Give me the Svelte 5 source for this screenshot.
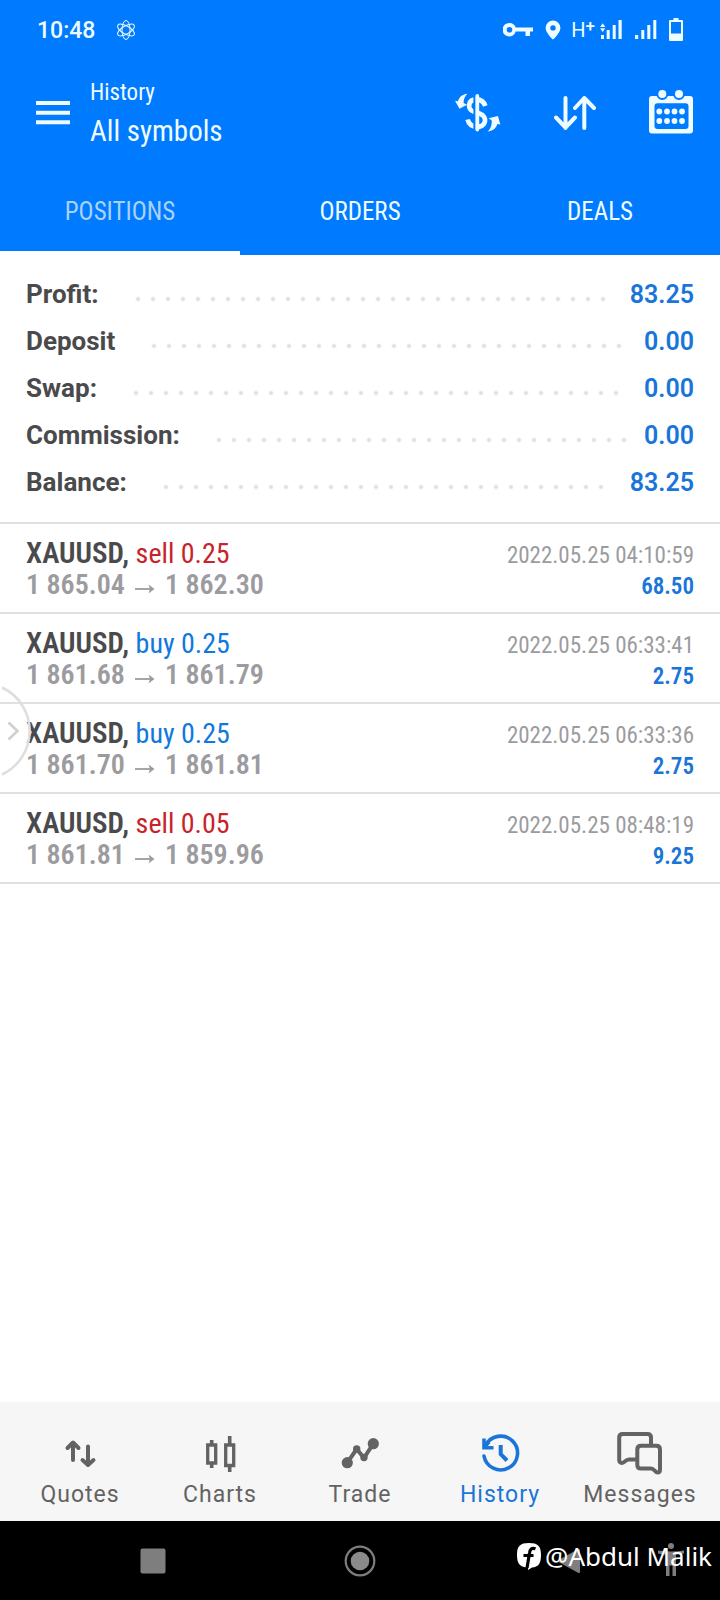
<script>
  const tabs = ['POSITIONS', 'ORDERS', 'DEALS'];
  let activeTab = $state('POSITIONS');

  const summary = [
    { label: 'Profit:', value: '83.25' },
    { label: 'Deposit', value: '0.00' },
    { label: 'Swap:', value: '0.00' },
    { label: 'Commission:', value: '0.00' },
    { label: 'Balance:', value: '83.25' }
  ];

  const deals = [
    { symbol: 'XAUUSD,', side: 'sell', volume: '0.25', open: '1 865.04', close: '1 862.30', time: '2022.05.25 04:10:59', profit: '68.50' },
    { symbol: 'XAUUSD,', side: 'buy', volume: '0.25', open: '1 861.68', close: '1 861.79', time: '2022.05.25 06:33:41', profit: '2.75' },
    { symbol: 'XAUUSD,', side: 'buy', volume: '0.25', open: '1 861.70', close: '1 861.81', time: '2022.05.25 06:33:36', profit: '2.75' },
    { symbol: 'XAUUSD,', side: 'sell', volume: '0.05', open: '1 861.81', close: '1 859.96', time: '2022.05.25 08:48:19', profit: '9.25' }
  ];

  const sections = ['Quotes', 'Charts', 'Trade', 'History', 'Messages'];
  let activeSection = $state('History');
</script>

<div class="screen">
  <header class="top">
    <div class="status">
      <span class="clock">10:48</span>
      <svg class="atom" width="20" height="22" viewBox="0 0 20 22" fill="none" stroke="currentColor" stroke-width="1">
        <ellipse cx="10" cy="11" rx="4" ry="9.5" />
        <ellipse cx="10" cy="11" rx="4" ry="9.5" transform="rotate(60 10 11)" />
        <ellipse cx="10" cy="11" rx="4" ry="9.5" transform="rotate(-60 10 11)" />
      </svg>
      <span class="fill"></span>
      <svg width="30" height="24" viewBox="0 0 30 24">
        <path fill="currentColor" fill-rule="evenodd" d="M6.5 5a6.7 6.7 0 0 1 6.2 4.5H30v4h-3V18h-4.500v-4.500h-9.800A6.700 6.700 0 1 1 6.500 5zM6.500 9a2.800 2.800 0 1 0 0 5.600a2.800 2.800 0 0 0 0-5.600z" />
      </svg>
      <svg class="pin" width="16" height="20" viewBox="0 0 16 20">
        <path fill="currentColor" fill-rule="evenodd" d="M8 .5A7.400 7.400 0 0 0 .6 8C.6 13 8 19.500 8 19.500S15.400 13 15.400 8A7.400 7.400 0 0 0 8 .5zM8 5.200a2.700 2.700 0 1 1 0 5.400a2.700 2.700 0 0 1 0-5.400z" />
      </svg>
      <span class="net">H<sup>+</sup></span>
      <svg class="signal" width="22" height="22" viewBox="0 0 22 22" fill="currentColor">
        <path d="M.1 8L2.700 4.300L5.300 8zM.1 9.200L2.700 12.900L5.300 9.200zM1 16h3v4H1zM6.700 11h3v9h-3zM12.700 6h3v14h-3zM18.500 1h3.200v19h-3.200z" />
      </svg>
      <svg class="signal two" width="22" height="22" viewBox="0 0 22 22" fill="currentColor">
        <path d="M0 16h3.200v4H0zM6.300 11h3v9h-3zM12.300 6h3v14h-3zM18.300 1h3v19h-3z" />
      </svg>
      <svg class="battery" width="14" height="24" viewBox="0 0 14 24">
        <path fill="currentColor" fill-rule="evenodd" d="M4.500 0h5v2H13a1 1 0 0 1 1 1v19a1 1 0 0 1-1 1H1a1 1 0 0 1-1-1V3a1 1 0 0 1 1-1h3.500zM2 4v11.500h10V4z" />
      </svg>
    </div>

    <div class="bar">
      <button class="menu" aria-label="Menu">
        <svg width="34" height="26" viewBox="0 0 34 26" fill="currentColor">
          <path d="M0 1h34v4H0zM0 10.700h34v4H0zM0 20.300h34v4H0z" />
        </svg>
      </button>
      <div class="title">
        <span class="overline">History</span>
        <h1>All symbols</h1>
      </div>
      <button aria-label="Currency">
        <svg width="46" height="40" viewBox="0 0 46 40" fill="none" stroke="currentColor">
          <path stroke-width="4.800" d="M30.300 13C28.500 8 25.500 6.500 21.500 6.500C12.500 6.500 12 16.500 18.500 18.500L25 20.800C33 24 31 34 22.300 33.800C17 33.700 13.800 31.500 12.600 26.500" />
          <path stroke="#007aff" stroke-width="2.400" d="M19.600 1v37" />
          <path stroke-width="3.800" stroke-linecap="round" d="M22.300 3v33.500" />
          <path fill="currentColor" stroke="none" d="M12.500 .8C7.500 1 3.800 4.300 3 8.300L0 7.800L4.500 15.800L12 11.800L8.600 10C8.600 6.700 9.500 3.500 12.500 .8z" />
          <path fill="currentColor" stroke="none" d="M32.500 38.500C37.500 38.300 41.500 35 42.300 31L45.300 31.500L43 23L33.500 25.300L36.800 27.500C36.800 31.500 36 36 32.500 38.500z" />
        </svg>
      </button>
      <button aria-label="Sort">
        <svg width="42" height="36" viewBox="0 0 42 36" fill="none" stroke="currentColor" stroke-width="4" stroke-linecap="round" stroke-linejoin="round">
          <path d="M11.500 3v30M2 22.500L11.500 32.500L21 22.500M30.300 33V3M21 13L30.300 3L40 13" />
        </svg>
      </button>
      <button aria-label="Calendar">
        <svg width="44" height="48" viewBox="0 0 44 48">
          <rect x="0" y="7" width="44" height="37.500" rx="3" fill="currentColor" />
          <rect x="5.500" y="14.300" width="34" height="25.700" rx="3" fill="#007aff" />
          <g fill="currentColor" stroke="#007aff" stroke-width="2">
            <circle cx="13.300" cy="5" r="5" />
            <circle cx="30" cy="5" r="5" />
          </g>
          <g fill="currentColor">
            {#each [22.500, 32] as y}
              {#each [10.300, 18, 25.500, 33] as x}
                <circle cx={x} cy={y} r="2.900" />
              {/each}
            {/each}
          </g>
        </svg>
      </button>
    </div>

    <nav class="tabs">
      {#each tabs as tab}
        <button class:active={activeTab === tab} onclick={() => (activeTab = tab)}>{tab}</button>
      {/each}
    </nav>
  </header>

  <main>
    <dl class="summary">
      {#each summary as item}
        <div class="line">
          <dt>{item.label}</dt>
          <span class="dots"></span>
          <dd>{item.value}</dd>
        </div>
      {/each}
    </dl>

    <ul class="deals">
      {#each deals as deal}
        <li>
          <div class="row">
            <span class="name"><b>{deal.symbol}</b> <span class={deal.side}>{deal.side} {deal.volume}</span></span>
            <time>{deal.time}</time>
          </div>
          <div class="row">
            <span class="prices">
              {deal.open}
              <svg width="20" height="32" viewBox="0 0 20 32" fill="none" stroke="currentColor" stroke-width="1.800"><path d="M0 20h17" /><path fill="currentColor" stroke="none" d="M13.500 15.500L19.500 20L13.500 24.500L15 20z" /></svg>
              {deal.close}
            </span>
            <span class="profit">{deal.profit}</span>
          </div>
        </li>
      {/each}
    </ul>

    <button class="handle" aria-label="Open side panel">
      <svg width="32" height="92" viewBox="0 0 32 92" fill="none">
        <path stroke="#dedede" stroke-width="2.500" d="M2 2.500A48 48 0 0 1 2 89.500" />
        <path stroke="#cfcfcf" stroke-width="2.500" d="M8.500 37.500L17.500 46L8.500 54.500" />
      </svg>
    </button>
  </main>

  <nav class="sections">
    {#each sections as section}
      <button class:active={activeSection === section} onclick={() => (activeSection = section)}>
        <svg width="48" height="46" viewBox="0 0 48 46" fill="none" stroke="currentColor">
          {#if section === 'Quotes'}
            <path stroke-width="4" stroke-linecap="round" stroke-linejoin="round" d="M17 31V14M11.500 19L17 13.500L22.500 19M32 17.500V35M26.500 31L32 36L37.500 31" />
          {:else if section === 'Charts'}
            <path stroke-width="3.300" d="M11.700 16h8v18h-8zM29.700 16h8v20.500h-8z" />
            <path stroke-width="3.600" d="M15.700 11v5M15.700 34v5M33.700 7v9M33.700 36v7" />
          {:else if section === 'Trade'}
            <path stroke-width="4" stroke-linejoin="round" d="M11.300 33.700L20.700 20L28 29L37.300 14.700" />
            <g fill="currentColor" stroke="none">
              <circle cx="11.300" cy="33.700" r="5.600" />
              <circle cx="20.700" cy="20" r="3.700" />
              <circle cx="28" cy="28.500" r="3.700" />
              <circle cx="37.300" cy="14.700" r="5.600" />
            </g>
          {:else if section === 'History'}
            <path stroke-width="3.600" stroke-linecap="round" d="M8 27A16.900 16.900 0 1 0 9.500 16.500" />
            <path stroke-width="3.600" d="M8 9.500v9.200h9.500" />
            <path stroke-width="3.600" d="M8 18.500L13 13" />
            <path stroke-width="4" stroke-linejoin="round" d="M24.700 16v9.200L31 31.500" />
          {:else}
            <path stroke-width="4" stroke-linejoin="round" d="M21 30.500H13C9 30.500 9 34 6 34Q3.200 34 3.200 31V8.500Q3.200 5 6.700 5H31.500Q35 5 35 8.500V16" />
            <path stroke-width="4" stroke-linejoin="round" d="M25 16.800H40.300Q44 16.800 44 20.500V40.500Q44 43.500 41.500 43.500C38.500 43.500 38.500 39.500 35 39.500H25Q21.300 39.500 21.300 36V20.500Q21.300 16.800 25 16.800z" />
          {/if}
        </svg>
        <span>{section}</span>
      </button>
    {/each}
  </nav>

  <footer class="system">
    <button aria-label="Recent apps">
      <svg width="26" height="26" viewBox="0 0 26 26"><rect x=".5" y=".5" width="25" height="25" rx="2" fill="#7e7e7e" /></svg>
    </button>
    <button aria-label="Home">
      <svg width="32" height="32" viewBox="0 0 32 32" fill="none" stroke="#7e7e7e">
        <circle cx="16" cy="16" r="14.300" stroke-width="2.200" />
        <circle cx="16" cy="16" r="9.300" fill="#8a8a8a" stroke="none" />
      </svg>
    </button>
    <button aria-label="Back">
      <svg width="26" height="28" viewBox="0 0 26 28"><path fill="#7e7e7e" stroke="#7e7e7e" stroke-width="2" stroke-linejoin="round" d="M25 3v22L5 14z" /></svg>
    </button>
    <button class="access" aria-label="Accessibility">
      <svg width="28" height="34" viewBox="0 0 28 34" fill="#7e7e7e">
        <circle cx="14" cy="3" r="3" />
        <path d="M1 7.500Q14 9.500 27 7.500V10.500L19 11.800V33H15.500V22.500H12.500V33H9V11.800L1 10.500z" />
      </svg>
    </button>
    <div class="credit">
      <svg width="26" height="28" viewBox="0 0 26 28">
        <path fill="#fff" d="M13 1C22 1 25 4 25 13S22 25 16 25.500L12 28V25.500C4 25.300 1 22 1 13S4 1 13 1z" />
        <path fill="none" stroke="#000" stroke-width="3.200" d="M19.500 6.800C15.500 5.300 14 7.500 13.500 11L11 26M7.500 13.500H17.500" />
      </svg>
      <span>@Abdul Malik</span>
    </div>
  </footer>
</div>

<style>
  :global(body) {
    margin: 0;
    background: #fff;
  }
  .screen {
    min-height: 100vh;
    display: flex;
    flex-direction: column;
    font-family: Roboto, sans-serif;
    color: #4a4a4c;
  }
  button {
    border: 0;
    padding: 0;
    margin: 0;
    background: none;
    color: inherit;
    font: inherit;
    cursor: pointer;
  }
  svg {
    display: block;
    flex: none;
  }
  .top {
    background: #007aff;
    color: #eefcff;
  }
  .status {
    display: flex;
    align-items: center;
    height: 60px;
    padding: 0 37px;
  }
  .clock {
    font-size: 23px;
    font-weight: 500;
  }
  .atom {
    margin-left: 21px;
  }
  .fill {
    flex: 1;
  }
  .pin {
    margin-left: 12px;
  }
  .net {
    display: flex;
    margin-left: 10px;
    font-size: 20px;
    line-height: 24px;
  }
  .net sup {
    font-size: 17px;
    line-height: 16px;
    font-weight: 500;
  }
  .signal {
    margin-left: 5px;
  }
  .two {
    margin-left: 13px;
  }
  .battery {
    margin-left: 12px;
  }
  .bar {
    display: flex;
    align-items: center;
    gap: 53px;
    height: 106px;
    padding: 0 27px 0 36px;
  }
  .menu {
    margin-right: -33px;
  }
  .title {
    flex: 1;
    padding-bottom: 3px;
    font-family: "Roboto Condensed", Roboto, sans-serif;
  }
  .title .overline,
  h1 {
    display: block;
    margin: 0;
    line-height: 38px;
    font-weight: 400;
  }
  .overline {
    font-size: 23px;
  }
  h1 {
    font-size: 29px;
  }
  .tabs {
    display: grid;
    grid-template-columns: repeat(3, 1fr);
    height: 89px;
  }
  .tabs button {
    border-top: 5px solid transparent;
    border-bottom: 4px solid transparent;
    font-family: "Roboto Condensed", Roboto, sans-serif;
    font-size: 25px;
  }
  .tabs .active {
    border-bottom-color: #fff;
    color: #a9d2fb;
  }
  main {
    position: relative;
    flex: 1;
  }
  .summary {
    margin: 0;
    padding: 16px 26px;
    border-bottom: 2px solid #e0e0e1;
    font-size: 26px;
    line-height: 47px;
    font-weight: 700;
  }
  .line {
    display: flex;
  }
  .dots {
    flex: 1;
    margin: 0 17px 0 36px;
    background: radial-gradient(circle at 3px 28px, #dfdfe1 1px, transparent 3px) 0 0 / 15px 47px repeat-x;
  }
  dd {
    margin: 0;
    color: #1976d8;
    font-size: 25px;
    font-weight: 600;
  }
  .deals {
    margin: 0;
    padding: 0;
    list-style: none;
    font-family: "Roboto Condensed", Roboto, sans-serif;
  }
  li {
    padding: 13px 26px 11px;
    border-bottom: 2px solid #e0e0e1;
  }
  .row {
    display: flex;
    align-items: baseline;
    justify-content: space-between;
    height: 32px;
    font-size: 28px;
    line-height: 32px;
  }
  .name b {
    font-size: 29px;
    font-weight: 600;
  }
  .sell {
    color: #c8232a;
  }
  .buy {
    color: #1079dd;
  }
  .prices {
    display: flex;
    align-items: center;
    gap: 10px;
    color: #9c9ca0;
    font-weight: 600;
  }
  time,
  .profit {
    font-size: 23px;
  }
  time {
    color: #9c9ca0;
  }
  .profit {
    color: #1976d8;
    font-weight: 600;
  }
  .handle {
    position: absolute;
    left: 0;
    top: 430px;
  }
  .sections {
    display: grid;
    grid-template-columns: repeat(5, 1fr);
    padding: 27px 10px 10px;
    background: #f6f6f6;
    color: #636363;
  }
  .sections button {
    display: flex;
    flex-direction: column;
    align-items: center;
    gap: 4px;
    font-size: 23px;
    line-height: 32px;
    letter-spacing: 1px;
  }
  .sections .active {
    color: #1976d8;
  }
  .system {
    position: relative;
    display: grid;
    grid-template-columns: 306fr 108fr 306fr;
    height: 79px;
    background: #000;
  }
  .system button {
    display: flex;
    align-items: center;
    justify-content: center;
  }
  .system .access {
    position: absolute;
    right: 35px;
    top: 22px;
  }
  .credit {
    position: absolute;
    right: 8px;
    top: 17px;
    display: flex;
    align-items: center;
    gap: 3px;
    color: #fff;
    font-family: "Noto Sans", sans-serif;
    font-size: 26px;
    line-height: 36px;
  }
</style>
